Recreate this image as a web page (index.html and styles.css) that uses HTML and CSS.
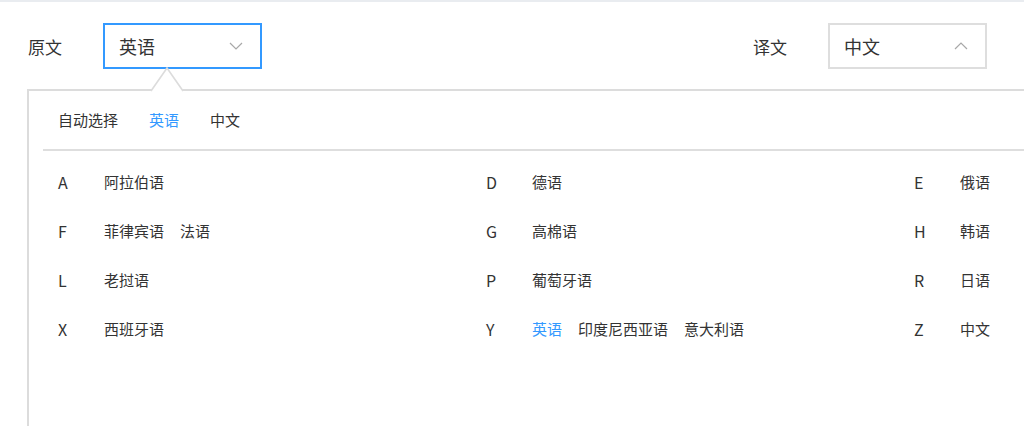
FILE: index.html
```html
<!DOCTYPE html>
<html lang="zh-CN">
<head>
    <meta charset="UTF-8">
    <meta name="viewport" content="width=device-width, initial-scale=1.0">
    <title>语言选择</title>
    <link rel="stylesheet" href="styles.css">
</head>
<body>
    <div class="toolbar">
        <div class="lang-field">
            <span class="field-label">原文</span>
            <div class="select active">
                <span>英语</span>
                <svg class="chevron" width="14" height="8" viewBox="0 0 14 8"><polyline points="1,1 7,7 13,1" fill="none" stroke="#a8a8a8" stroke-width="1.2"/></svg>
            </div>
        </div>
        <div class="lang-field">
            <span class="field-label">译文</span>
            <div class="select">
                <span>中文</span>
                <svg class="chevron" width="14" height="8" viewBox="0 0 14 8"><polyline points="1,7 7,1 13,7" fill="none" stroke="#a8a8a8" stroke-width="1.2"/></svg>
            </div>
        </div>
    </div>

    <div class="panel">
        <svg class="caret" width="32" height="25" viewBox="0 0 32 25"><polygon points="0,24 16,1 32,24" fill="#fff"/><polyline points="0,24 16,1 32,24" fill="none" stroke="#dcdcdc" stroke-width="1.6"/></svg>

        <div class="tabs">
            <span class="tab">自动选择</span>
            <span class="tab current">英语</span>
            <span class="tab">中文</span>
        </div>

        <div class="lang-grid">
            <div class="group"><span class="letter">A</span><span class="names"><span>阿拉伯语</span></span></div>
            <div class="group"><span class="letter">D</span><span class="names"><span>德语</span></span></div>
            <div class="group"><span class="letter">E</span><span class="names"><span>俄语</span></span></div>

            <div class="group"><span class="letter">F</span><span class="names"><span>菲律宾语</span><span>法语</span></span></div>
            <div class="group"><span class="letter">G</span><span class="names"><span>高棉语</span></span></div>
            <div class="group"><span class="letter">H</span><span class="names"><span>韩语</span></span></div>

            <div class="group"><span class="letter">L</span><span class="names"><span>老挝语</span></span></div>
            <div class="group"><span class="letter">P</span><span class="names"><span>葡萄牙语</span></span></div>
            <div class="group"><span class="letter">R</span><span class="names"><span>日语</span></span></div>

            <div class="group"><span class="letter">X</span><span class="names"><span>西班牙语</span></span></div>
            <div class="group"><span class="letter">Y</span><span class="names"><span class="current">英语</span><span>印度尼西亚语</span><span>意大利语</span></span></div>
            <div class="group"><span class="letter">Z</span><span class="names"><span>中文</span></span></div>
        </div>
    </div>
</body>
</html>
```

FILE: styles.css
```css
html, body { height: 100%; }
body { margin: 0; font-family: "Noto Sans CJK SC", "Noto Sans", sans-serif; color: #333; background: #fff; border-top: 2px solid #e9ecf0; box-sizing: border-box; overflow: hidden; }

.toolbar { display: flex; justify-content: space-between; padding: 21px 37px 0 28px; }
.lang-field { display: flex; align-items: center; gap: 41px; }
.field-label { font-size: 17px; }
.select { width: 159px; height: 46px; box-sizing: border-box; border: 2px solid #dedede; display: flex; align-items: center; justify-content: space-between; padding: 0 17px 0 14px; font-size: 18px; }
.select.active { border-color: #3399ff; }
.chevron { display: block; }

.panel { position: relative; margin: 20px 0 0 27px; height: 340px; border: 2px solid #dcdcdc; border-right: none; border-bottom: none; }
.caret { position: absolute; left: 122px; top: -24px; }

.tabs { display: flex; gap: 31px; height: 60px; box-sizing: border-box; padding: 0 0 2px 15px; align-items: center; margin-left: 14px; border-bottom: 2px solid #dedede; font-size: 15px; }
.tab.current, .names .current { color: #3399ff; }

.lang-grid { display: grid; grid-template-columns: 428px 428px 1fr; grid-auto-rows: 49px; padding: 6px 0 0 29px; font-size: 15px; }
.group { display: flex; align-items: center; }
.letter { width: 46px; font-size: 16px; }
.names { display: flex; gap: 16px; }
```
